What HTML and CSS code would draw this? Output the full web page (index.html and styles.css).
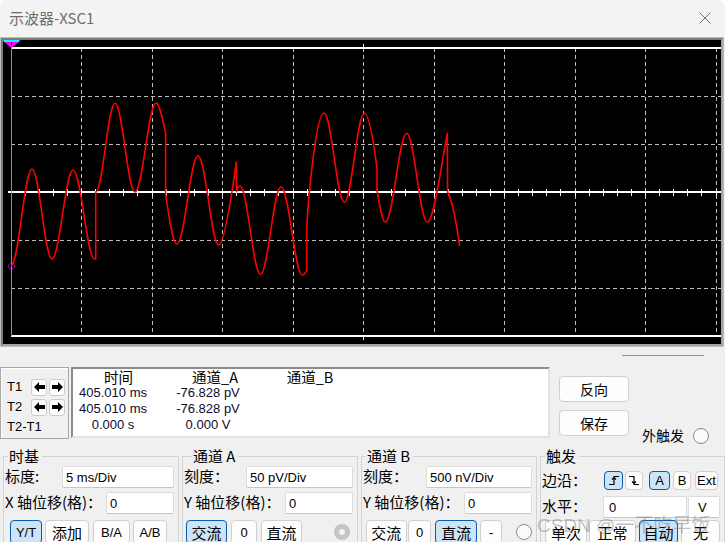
FILE: index.html
```html
<!DOCTYPE html>
<html lang="zh-CN">
<head>
<meta charset="utf-8">
<title>示波器-XSC1</title>
<link rel="stylesheet" href="styles.css">
</head>
<body>
<div class="win">
  <header class="titlebar">
    <span class="title">示波器-XSC1</span>
    <svg class="close" width="12" height="12" viewBox="0 0 12 12"><path d="M0.5 0.5L11.5 11.5M11.5 0.5L0.5 11.5" stroke="#707070" stroke-width="1" fill="none"/></svg>
  </header>

  <div class="frame"><div class="screen">
    <svg width="718" height="304" viewBox="3 40 718 304">
      <g stroke="#bdbdbd" stroke-width="1" stroke-dasharray="4 3" fill="none">
        <path d="M81.5 48V336M152.5 48V336M222.5 48V336M293.5 48V336M363.5 48V336M434.5 48V336M504.5 48V336M575.5 48V336M645.5 48V336M716.5 48V336"/>
        <path d="M11 96.5H721M11 144.5H721M11 240.5H721M11 288.5H721"/>
      </g>
      <g stroke="#ffffff" fill="none">
        <path d="M11 48H721M11 336H721M8 192H721" stroke-width="2"/>
        <path d="M363.5 44V48M363.5 336V340" stroke-width="1"/>
        <path stroke-width="1" d="M25.5 189v7M39.5 189v7M53.5 189v7M67.5 189v7M81.5 189v7M95.5 189v7M109.5 189v7M123.5 189v7M137.5 189v7M152.5 189v7M166.5 189v7M180.5 189v7M194.5 189v7M208.5 189v7M222.5 189v7M236.5 189v7M250.5 189v7M264.5 189v7M278.5 189v7M293.5 189v7M307.5 189v7M321.5 189v7M335.5 189v7M349.5 189v7M363.5 189v7M377.5 189v7M391.5 189v7M405.5 189v7M419.5 189v7M434.5 189v7M448.5 189v7M462.5 189v7M476.5 189v7M490.5 189v7M504.5 189v7M518.5 189v7M532.5 189v7M546.5 189v7M560.5 189v7M575.5 189v7M589.5 189v7M603.5 189v7M617.5 189v7M631.5 189v7M645.5 189v7M659.5 189v7M673.5 189v7M687.5 189v7M701.5 189v7M716.5 189v7"/>
      </g>
      <path d="M11.5 48V336" stroke="#22dd22" stroke-width="1" fill="none"/>
      <path fill="none" stroke="#ff0000" stroke-width="1.6" stroke-linejoin="round"
        d="M11,266 C18.6,266 24.4,169 32,169 C39.3,169 44.7,259 52,259 C59.6,259 65.4,170 73,170 C81,170 87,259 94.5,259 L95.7,259 L95.7,192 C102.7,192 108,103 115,103 C122.3,103 127.7,192 135,192 C142.6,192 148.4,103 156,103 C159.5,103 163,121 165.6,133 L165.6,194 C169,216 172.5,244 177,244 C184.6,244 190.4,155.7 198,155.7 C205.6,155.7 211.4,245 218.5,245 C224,245 231,200 236.3,162.3 L236.6,191.7 C237.5,187 238.5,186 240,186 C247.5,186 253,274.5 260.5,274.5 C268,274.5 273.5,186.7 281,186.7 C289,186.7 294.5,275 302.3,275 C304,275 305.5,273 306.7,270 L306.7,229 C308,200 316,113 324,113 C331.4,113 337,202.3 344.3,202.3 C351.6,202.3 357,113.3 364.3,113.3 C369,113.3 374,145 377,168.3 L377,190 C379.5,205 382.5,222.3 385.3,222.3 C393,222.3 399,133.3 406.7,133.3 C414.2,133.3 419.8,222.3 427.3,222.3 C434,222.3 442,160 447.3,133.3 L447.6,192 C451,198 456,220 459.7,246"/>
      <circle cx="11.5" cy="266" r="3" fill="none" stroke="#ff00ff" stroke-width="1" stroke-dasharray="1.5 1"/>
      <polygon points="3,40 20,40 19,42 4,42" fill="#00ffff"/>
      <polygon points="4,42 19,42 11.5,48" fill="#ff00ff"/>
      <rect x="11" y="42" width="1" height="3" fill="#000"/>
    </svg>
  </div></div>

  <div class="panel">
    <div class="top">
      <div class="cursors">
        <div class="crow"><span class="clabel">T1</span>
          <span class="abtn"><svg width="11" height="10" viewBox="0 0 11 10"><polygon points="0,5 5,0 5,3 11,3 11,7 5,7 5,10" fill="#000"/></svg></span>
          <span class="abtn"><svg width="11" height="10" viewBox="0 0 11 10"><polygon points="11,5 6,0 6,3 0,3 0,7 6,7 6,10" fill="#000"/></svg></span>
        </div>
        <div class="crow"><span class="clabel">T2</span>
          <span class="abtn"><svg width="11" height="10" viewBox="0 0 11 10"><polygon points="0,5 5,0 5,3 11,3 11,7 5,7 5,10" fill="#000"/></svg></span>
          <span class="abtn"><svg width="11" height="10" viewBox="0 0 11 10"><polygon points="11,5 6,0 6,3 0,3 0,7 6,7 6,10" fill="#000"/></svg></span>
        </div>
        <div class="crow"><span class="clabel">T2-T1</span></div>
      </div>

      <div class="readout">
        <div class="hd hd-t">时间</div><div class="hd hd-a">通道_A</div><div class="hd">通道_B</div>
        <div>405.010 ms</div><div>-76.828 pV</div><div></div>
        <div>405.010 ms</div><div>-76.828 pV</div><div></div>
        <div>0.000 s</div><div>0.000 V</div><div></div>
      </div>

      <div class="rside">
        <div class="sep"></div>
        <div class="rrow">
          <div class="actions">
            <span class="btn big">反向</span>
            <span class="btn big">保存</span>
          </div>
          <div class="ext"><span>外触发</span><span class="radio ml9"></span></div>
        </div>
      </div>
    </div>

    <div class="groups">
      <fieldset class="grp">
        <legend>时基</legend>
        <div class="frow"><span class="lbl">标度:</span><span class="inp w112">5 ms/Div</span></div>
        <div class="frow"><span class="lbl">X 轴位移(格)：</span><span class="inp w68">0</span></div>
        <div class="brow">
          <span class="btn on lat w32 ml5">Y/T</span>
          <span class="btn w44 ml3">添加</span>
          <span class="btn lat w37 ml4">B/A</span>
          <span class="btn lat w34 ml3">A/B</span>
        </div>
      </fieldset>

      <fieldset class="grp">
        <legend class="lg-a">通道 A</legend>
        <div class="frow"><span class="lbl">刻度：</span><span class="inp w107">50 pV/Div</span></div>
        <div class="frow"><span class="lbl">Y 轴位移(格)：</span><span class="inp w68">0</span></div>
        <div class="brow">
          <span class="btn on w41 ml2">交流</span>
          <span class="btn lat w26 ml4">0</span>
          <span class="btn w41 ml4">直流</span>
          <span class="radio-dis ml32"></span>
        </div>
      </fieldset>

      <fieldset class="grp">
        <legend>通道 B</legend>
        <div class="frow"><span class="lbl">刻度：</span><span class="inp w106">500 nV/Div</span></div>
        <div class="frow"><span class="lbl">Y 轴位移(格)：</span><span class="inp w68">0</span></div>
        <div class="brow">
          <span class="btn w41 ml3">交流</span>
          <span class="btn lat w24 ml1">0</span>
          <span class="btn on w42 ml4">直流</span>
          <span class="btn lat w22 ml3">-</span>
          <span class="radio ml14"></span>
        </div>
      </fieldset>

      <fieldset class="grp grp-t">
        <legend>触发</legend>
        <div class="frow trow1">
          <span class="lbl lw62">边沿：</span>
          <span class="btn on sm w19"><svg width="12" height="11" viewBox="0 0 12 11"><path d="M1 9.5H6V1.5H11M4 4.5L6 2.5L8 4.5" stroke="#000" stroke-width="1.2" fill="none"/></svg></span>
          <span class="btn sm w18 ml2"><svg width="12" height="11" viewBox="0 0 12 11"><path d="M1 1.5H6V9.5H11M4 6.5L6 8.5L8 6.5" stroke="#000" stroke-width="1.2" fill="none"/></svg></span>
          <span class="btn on sm lat w21 ml6">A</span>
          <span class="btn sm lat w18 ml3">B</span>
          <span class="btn sm lat w23 ml4">Ext</span>
        </div>
        <div class="frow trow2">
          <span class="lbl lw61">水平：</span>
          <span class="inp w84 pl5">0</span>
          <span class="inp sel w32 ml1">V</span>
        </div>
        <div class="brow trow3">
          <span class="btn w42 ml3">单次</span>
          <span class="btn w47 ml2">正常</span>
          <span class="btn on w39 ml3">自动</span>
          <span class="btn w39 ml3">无</span>
        </div>
      </fieldset>
    </div>
  </div>

  <div class="wm">CSDN @一不吃早饭</div>
</div>
</body>
</html>
```

FILE: styles.css
```css
* { box-sizing: border-box; margin: 0; padding: 0; }
html, body { width: 725px; height: 542px; overflow: hidden; }
body {
  background: #ffffff;
  font-family: "Noto Sans CJK SC", "Liberation Sans", sans-serif;
  color: #000;
}
.win {
  position: relative;
  width: 725px;
  height: 542px;
  background: #f0f0f0;
  border-top-left-radius: 8px;
  border-top-right-radius: 8px;
  overflow: hidden;
}
.titlebar {
  height: 37px;
  background: #f3f3f3;
  display: flex;
  align-items: center;
  justify-content: space-between;
  padding: 0 14px 1px 9px;
}
.title { font-size: 15px; line-height: 18px; color: #6e6e6e; }
.close { display: block; }

.frame { width: 724px; height: 310px; border: 1px solid #bebebe; }
.screen {
  width: 722px;
  height: 308px;
  border: 2px solid;
  border-color: #7b7b7b #a3a3a3 #a3a3a3 #7b7b7b;
  background: #000;
}
.screen svg { display: block; }

.top { display: flex; height: 100px; }
.cursors {
  margin-top: 20px;
  width: 69px;
  height: 72px;
  border: 1px solid #a8a8a8;
  box-shadow: inset 1px 1px 0 #ffffff;
  padding: 9px 0 0 6px;
  font-family: "Liberation Sans", sans-serif;
  font-size: 13px;
}
.crow { display: flex; align-items: center; height: 20px; }
.clabel { width: 24px; line-height: 16px; white-space: nowrap; }
.abtn {
  width: 16px;
  height: 17px;
  margin-right: 2px;
  display: flex;
  align-items: center;
  justify-content: center;
  background: #fdfdfd;
  border: 1px solid #cbcbcb;
  border-radius: 3px;
}
.readout {
  margin: 20px 0 0 2px;
  width: 479px;
  height: 71px;
  background: #fff;
  border: 2px solid;
  border-color: #8c8c8c #e2e2e2 #e2e2e2 #8c8c8c;
  display: grid;
  grid-template-columns: 80px 110px 94px;
  grid-auto-rows: 16px;
  align-content: start;
  font-family: "Liberation Sans", sans-serif;
  font-size: 13px;
  line-height: 16px;
  text-align: center;
  color: #0d0d30;
  white-space: nowrap;
}
.hd { font-family: "Noto Sans CJK SC", sans-serif; font-size: 14.5px; color: #000; }
.hd-t { padding-left: 11px; }
.hd-a { padding-left: 14px; }

.rside { margin-left: 9px; flex: 1; display: flex; flex-direction: column; }
.sep { margin: 8px 0 0 63px; width: 82px; height: 1px; background: #909090; }
.rrow { display: flex; margin-top: 20px; }
.actions { display: flex; flex-direction: column; gap: 8px; }
.ext {
  display: flex;
  align-items: center;
  height: 17px;
  margin: 51px 0 0 13px;
  font-size: 14px;
  line-height: 17px;
}

.groups { display: flex; gap: 3px; padding-left: 3px; }
.grp {
  flex: none;
  width: 176px;
  height: 110px;
  min-width: 0;
  border: 1px solid #d3d3d3;
  padding: 1px 4px 0 1px;
}
.grp-t { width: 185px; }
legend { margin-left: 3px; padding: 0 3px 0 1px; font-size: 15px; line-height: 18px; }
.lg-a { margin-left: 8px; }
.frow { display: flex; align-items: center; justify-content: space-between; height: 22px; }
.frow + .frow { margin-top: 4px; }
.trow1 { justify-content: flex-start; height: 19px; margin-top: 5px; }
.frow.trow2 { justify-content: flex-start; margin-top: 6px; }
.lbl { font-size: 15px; line-height: 20px; padding-bottom: 2px; white-space: nowrap; }
.lw62 { width: 62px; }
.lw61 { width: 61px; }
.inp {
  height: 22px;
  display: flex;
  align-items: center;
  padding-left: 3px;
  background: #fff;
  border: 1px solid #dcdcdc;
  border-bottom-color: #c6c6c6;
  border-radius: 2px;
  font-family: "Liberation Sans", sans-serif;
  font-size: 13px;
  white-space: nowrap;
}
.pl5 { padding-left: 5px; }
.sel { padding-left: 9px; }
.brow { display: flex; align-items: center; height: 24px; margin-top: 6px; }
.brow.trow3 { margin-top: 2px; }

.btn {
  height: 24px;
  display: flex;
  align-items: center;
  justify-content: center;
  background: #fdfdfd;
  border: 1px solid #d0d0d0;
  border-radius: 4px;
  font-size: 15px;
  line-height: 1;
  white-space: nowrap;
}
.btn.on { background: #cce4f7; border-color: #0a5ca8; }
.btn.big { width: 70px; height: 26px; font-size: 14px; }
.btn.sm { height: 19px; }
.lat { font-family: "Liberation Sans", sans-serif; font-size: 13px; }

.radio {
  flex: none;
  width: 16px;
  height: 16px;
  border-radius: 50%;
  border: 1px solid #8a8a8a;
  background: #fbfbfb;
}
.radio-dis {
  flex: none;
  width: 16px;
  height: 16px;
  border-radius: 50%;
  background: #c4c4c4;
  display: flex;
  align-items: center;
  justify-content: center;
}
.radio-dis::after { content: ""; width: 6px; height: 6px; border-radius: 50%; background: #f2f2f2; }

.w18 { width: 18px; } .w19 { width: 19px; } .w21 { width: 21px; } .w22 { width: 22px; }
.w23 { width: 23px; } .w24 { width: 24px; } .w26 { width: 26px; } .w32 { width: 32px; }
.w34 { width: 34px; } .w37 { width: 37px; } .w39 { width: 39px; } .w41 { width: 41px; }
.w42 { width: 42px; } .w44 { width: 44px; } .w47 { width: 47px; } .w68 { width: 68px; }
.w84 { width: 84px; } .w106 { width: 106px; } .w107 { width: 107px; } .w112 { width: 112px; }
.ml1 { margin-left: 1px; } .ml2 { margin-left: 2px; } .ml3 { margin-left: 3px; }
.ml4 { margin-left: 4px; } .ml5 { margin-left: 5px; } .ml6 { margin-left: 6px; }
.ml9 { margin-left: 9px; } .ml14 { margin-left: 14px; } .ml32 { margin-left: 32px; }

.wm {
  position: absolute;
  left: 537px;
  top: 515px;
  font-family: "Liberation Sans", "Noto Sans CJK SC", sans-serif;
  font-size: 19px;
  line-height: 22px;
  color: rgba(110, 110, 110, 0.42);
  white-space: nowrap;
  pointer-events: none;
}
```
